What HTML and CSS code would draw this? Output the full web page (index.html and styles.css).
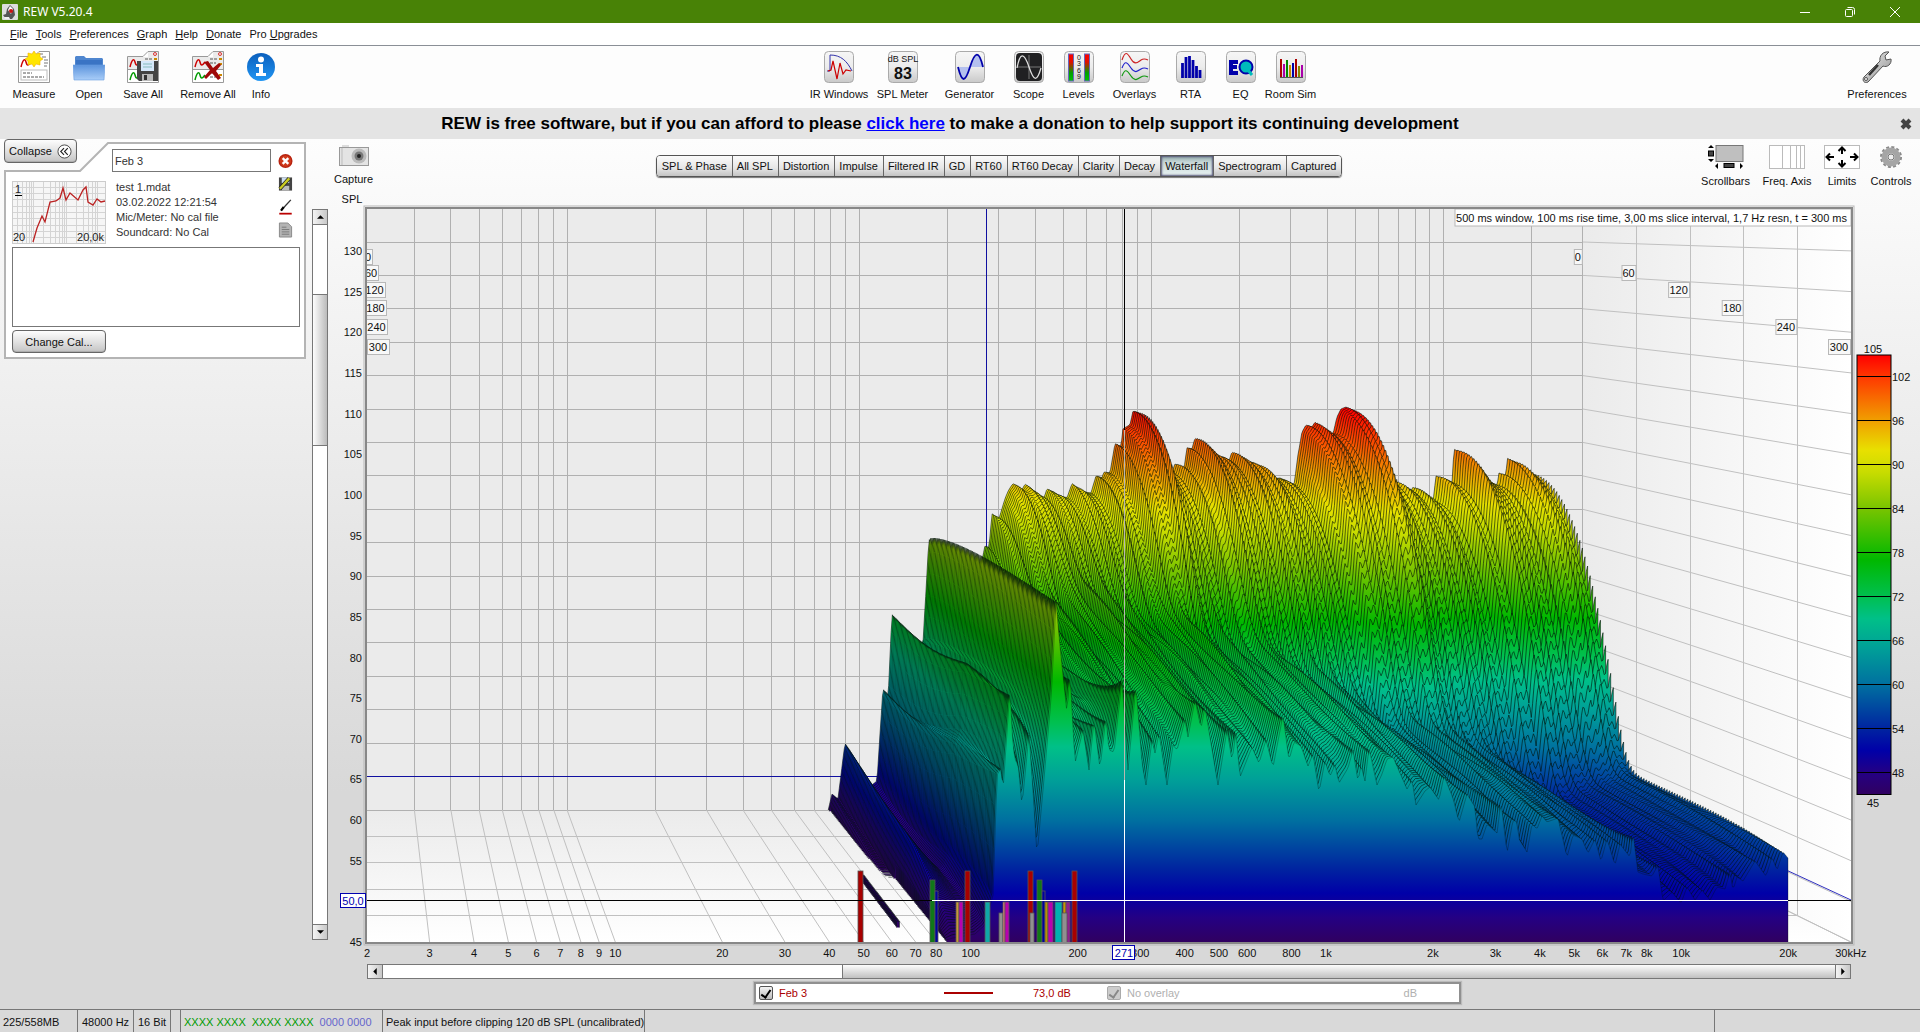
FILE: index.html
```html
<!DOCTYPE html>
<html lang="en">
<head>
<meta charset="utf-8">
<title>REW V5.20.4</title>
<link rel="stylesheet" href="styles.css">
</head>
<body>
<svg class="defs" aria-hidden="true">
  <defs>
    <linearGradient id="tile" x1="0" y1="0" x2="0" y2="1"><stop offset="0" stop-color="#f6f6f6"/><stop offset=".5" stop-color="#ececec"/><stop offset="1" stop-color="#c9c9c9"/></linearGradient>
    <linearGradient id="meter" x1="0" y1="0" x2="0" y2="1"><stop offset="0" stop-color="#f00"/><stop offset=".3" stop-color="#e01000"/><stop offset=".7" stop-color="#00a000"/><stop offset="1" stop-color="#00c000"/></linearGradient>
    <linearGradient id="folder" x1="0" y1="0" x2="0" y2="1"><stop offset="0" stop-color="#5b93dc"/><stop offset="1" stop-color="#a9cdf8"/></linearGradient>
    <linearGradient id="blue" x1="0" y1="0" x2="0" y2="1"><stop offset="0" stop-color="#0b5fbd"/><stop offset="1" stop-color="#2196f3"/></linearGradient>
    <linearGradient id="metal" x1="0" y1="0" x2="1" y2="1"><stop offset="0" stop-color="#f2f2f2"/><stop offset="1" stop-color="#8d8d8d"/></linearGradient>
    <symbol id="sheet" viewBox="0 0 32 32">
      <path d="M.5 31.500V5.500H16l5-5h10.500v31z" fill="#fff" stroke="#999"/>
      <path d="M1 6h20V1h10v17H1z" fill="#ddd" opacity=".6"/>
      <path d="M3 16c2-8 4-9 5-5s2 4 5 0" fill="none" stroke="#c00" stroke-width="1.500"/>
      <path d="M3 29c2-8 4-9 5-5s2 4 5 0" fill="none" stroke="#090" stroke-width="1.500"/>
      <path d="M18 8h7M18 12h6M18 22h7M18 26h6" stroke="#555" stroke-dasharray="3 1"/>
      <path d="M27 8h3M27 13h3M27 24h3" stroke="#c80" stroke-width="2"/>
      <circle cx="28" cy="3" r="1.500" fill="none" stroke="#d33"/>
      <path d="M1 18.500h30" stroke="#999"/>
    </symbol>
  </defs>
</svg>

<header class="titlebar">
  <svg class="app-icon" viewBox="0 0 16 16"><rect width="16" height="16" rx="1" fill="#ddd"/><path d="M8 1l4 4 1 6-3 4H4L1 11l3-1 1-5z" fill="#555"/><path d="M8 2l3 3-2 5-3-4z" fill="#fff"/><circle cx="9" cy="7" r="2" fill="#c11"/><path d="M2 13h5l1 2H3z" fill="#eee"/></svg>
  <h1>REW V5.20.4</h1>
  <div class="window-buttons">
    <button aria-label="Minimize"><svg viewBox="0 0 12 12"><path d="M1 6.500h10"/></svg></button>
    <button aria-label="Restore"><svg viewBox="0 0 12 12"><rect x="1.500" y="3.500" width="7" height="7" rx="1"/><path d="M3.500 1.500h5q2 0 2 2v5"/></svg></button>
    <button aria-label="Close"><svg viewBox="0 0 12 12"><path d="M1 1l10 10M11 1L1 11"/></svg></button>
  </div>
</header>

<nav class="menu">
  <button><u>F</u>ile</button><button><u>T</u>ools</button><button><u>P</u>references</button><button><u>G</u>raph</button><button><u>H</u>elp</button><button><u>D</u>onate</button><button>Pro <u>U</u>pgrades</button>
</nav>

<div class="toolbar">
  <div class="tools tools-file">
    <button><svg viewBox="0 0 32 32"><path d="M.5 31.500V5.500H16l5-5h10.500v31z" fill="#fff" stroke="#999"/><path d="M3 16c2-8 4-9 5-5s2 4 5 0" fill="none" stroke="#c00" stroke-width="1.500"/><path d="M20 3h5M24 6h4M26 9h4M26 12h4M26 15h3" stroke="#777"/><rect x="3" y="19" width="26" height="10" fill="#fff" stroke="#bbb"/><path d="M5 22h9M5 26h21" stroke="#555" stroke-dasharray="3 1"/><path d="M16 0l2 3 4-1 0 4 3 2-3 2 0 4-4-1-2 3-2-3-4 1 0-4-3-2 3-2 0-4 4 1z" fill="#ffe500" stroke="#f0b000" stroke-width=".6"/></svg>Measure</button>
    <button><svg viewBox="0 0 32 32"><path d="M2 14V6l1-1h8l2 2h16l1 1v6z" fill="#4f86cf"/><path d="M3 14V9h26v5z" fill="#3a74c4"/><path d="M0 14h32l-1 15H1z" fill="url(#folder)" stroke="#6a9ee0" stroke-width=".6"/></svg>Open</button>
    <button><svg viewBox="0 0 32 32"><use href="#sheet"/><path d="M10 10h21v20H12l-2-2z" fill="#444"/><rect x="14" y="10" width="13" height="10" fill="#d6e8fa"/><path d="M16 13h9M16 16h9" stroke="#8bb"/><rect x="15" y="23" width="11" height="7" fill="#bbb"/><rect x="17" y="24" width="3" height="5" fill="#333"/></svg>Save All</button>
    <button><svg viewBox="0 0 32 32"><use href="#sheet"/><path d="M12 11l4-1 5 7 6-5 2 2-5 6 5 7-3 2-6-7-6 6-2-2 6-7z" fill="#a00808"/></svg>Remove All</button>
    <button><svg viewBox="0 0 32 32"><circle cx="16" cy="16" r="14" fill="url(#blue)"/><circle cx="16" cy="8.500" r="3" fill="#fff"/><path d="M11 13h7v9h3v3H11v-3h3v-6h-3z" fill="#fff"/></svg>Info</button>
  </div>
  <div class="tools tools-main">
    <button><svg viewBox="0 0 32 32"><rect class="tile" x="1.500" y=".5" width="29" height="31" rx="4"/><path d="M4 20h3V4c11 0 17 6 22 16" fill="none" stroke="#33a"/><path d="M5 20l3-1 2-9 4 18 3-16 3 11 3-4 5 1" fill="none" stroke="#c00" stroke-width="1.200"/></svg>IR Windows</button>
    <button><svg viewBox="0 0 32 32"><rect class="tile" x="1.500" y=".5" width="29" height="31" rx="4"/><text x="16" y="11" font-size="9">dB SPL</text><text x="16" y="28" font-size="16" font-weight="bold">83</text></svg>SPL Meter</button>
    <button><svg viewBox="0 0 32 32"><rect class="tile" x="1.500" y=".5" width="29" height="31" rx="4"/><path d="M4 16h25C24-4 21 2 16 16 9 36 6 26 4 16z" fill="#b4c0ee"/><path d="M4 16c4 16 7 16 12 0S25-1 29 16" fill="none" stroke="#00a" stroke-width="1.800"/></svg>Generator</button>
    <button><svg viewBox="0 0 32 32"><rect class="tile" x="1.500" y=".5" width="29" height="31" rx="4"/><rect x="3" y="2" width="26" height="28" rx="4" fill="#202022"/><path d="M4 16h24M16 4v24" stroke="#777"/><path d="M4 17C7 1 11 1 16 16s8 15 12 1" fill="none" stroke="#ddd" stroke-width="1.300"/></svg>Scope</button>
    <button><svg viewBox="0 0 32 32"><rect class="tile" x="1.500" y=".5" width="29" height="31" rx="4"/><rect x="5.500" y="3" width="5" height="27" fill="url(#meter)" stroke="#66b"/><rect x="21.500" y="3" width="5" height="27" fill="url(#meter)" stroke="#66b"/><g font-size="7"><text x="16" y="9">0</text><text x="16" y="15">3</text><text x="16" y="22">6</text><text x="16" y="28">9</text></g></svg>Levels</button>
    <button><svg viewBox="0 0 32 32"><rect class="tile" x="1.500" y=".5" width="29" height="31" rx="4"/><g fill="none" stroke-width="1.200"><path d="M3 9C6 0 8 1 12 8s7 3 10 1 5-1 7 0" stroke="#c22"/><path d="M3 17c3-8 5-6 9 0s7 3 10 1 5-1 7 0" stroke="#22c"/><path d="M3 25c3-8 5-6 9 0s7 3 10 1 5-1 7 0" stroke="#191"/></g></svg>Overlays</button>
    <button><svg viewBox="0 0 32 32"><rect class="tile" x="1.500" y=".5" width="29" height="31" rx="4"/><path d="M7.500 27V12M11 27V6M14.500 27V5M18 27V9M21.500 27V15M25 27v-8" stroke="#00a" stroke-width="2.800"/></svg>RTA</button>
    <button><svg viewBox="0 0 32 32"><rect class="tile" x="1.500" y=".5" width="29" height="31" rx="4"/><path d="M4 9h9v4H8v1h4v4H8v2h5v4H4z" fill="#00a"/><circle cx="21" cy="16" r="6.500" fill="#0bb" stroke="#00a" stroke-width="2"/><path d="M22 18l5 6" stroke="#0bb" stroke-width="3"/></svg>EQ</button>
    <button><svg viewBox="0 0 32 32"><rect class="tile" x="1.500" y=".5" width="29" height="31" rx="4"/><path d="M5 26.500h23" stroke="#555"/><g stroke-width="2"><path d="M6 26V8" stroke="#a00"/><path d="M9 26V13" stroke="#a0a"/><path d="M12 26V9" stroke="#080"/><path d="M15 26V14" stroke="#c80"/><path d="M18 26V12" stroke="#00a"/><path d="M21 26V8" stroke="#a00"/><path d="M24 26V15" stroke="#880"/><path d="M27 26V14" stroke="#a0a"/></g></svg>Room Sim</button>
  </div>
  <div class="tools tools-prefs">
    <button><svg viewBox="0 0 32 32"><path d="M3 26L19 10c-1-5 3-10 9-9l-4 4 1 4 5-1c1 5-4 9-8 7L8 30c-3 4-8 0-5-4z" fill="url(#metal)" stroke="#555"/><path d="M8 24l9-10" stroke="#333" stroke-width="2.500"/><circle cx="5" cy="28" r="1.500" fill="#fff" stroke="#555"/></svg>Preferences</button>
  </div>
</div>

<div class="banner">
  <p>REW is free software, but if you can afford to please <a href="#donate">click here</a> to make a donation to help support its continuing development</p>
  <button aria-label="Dismiss"><svg viewBox="0 0 12 12"><path d="M2 2l8 8M10 2l-8 8" stroke="#444" stroke-width="4"/></svg></button>
</div>

<main class="workspace">
  <aside class="side">
    <button class="collapse">Collapse <svg viewBox="0 0 16 16"><circle cx="8" cy="8" r="7" fill="#fff" stroke="#444"/><path d="M7.500 4.500L4 8l3.500 3.500M11.500 4.500L8 8l3.500 3.500" fill="none" stroke="#222" stroke-width="1.200"/></svg></button>
    <section class="card">
      <svg class="card-shape" viewBox="0 0 302 217" preserveAspectRatio="none"><path d="M1 29h75l28-28h197v215H1z"/></svg>
      <input class="name" type="text" value="Feb 3" aria-label="Measurement name">
      <div class="info">
        <svg class="thumb" viewBox="0 0 94 63">
          <rect x=".5" y=".5" width="93" height="62" fill="#f6f6f6" stroke="#ccc"/>
          <path d="M1 6.500h92M1 12.500h92M1 18.500h92M1 25.500h92M1 31.500h92M1 37.500h92M1 44.500h92M1 50.500h92M1 56.500h92M5.500 1v61M10.500 1v61M14.500 1v61M17.500 1v61M19.500 1v61M21.500 1v61M31.500 1v61M38.500 1v61M43.500 1v61M47.500 1v61M50.500 1v61M52.500 1v61M54.500 1v61M64.500 1v61M71.500 1v61M76.500 1v61M80.500 1v61M83.500 1v61M85.500 1v61" stroke="#d4d4d4"/>
          <path d="M21 61l4-14 5-12 3 6 5-20 6-1 4-3 3-10 3 12 4-7 8 7 5-10 3-3 2 15 5 3 4-6 4 3 4-1" fill="none" stroke="#b22" stroke-width="1.300"/>
          <text x="3" y="12">1</text><path d="M3 14.500h7" stroke="#000"/>
          <text x="1" y="60">20</text><text x="92" y="60" text-anchor="end">20,0k</text>
        </svg>
        <ul>
          <li>test 1.mdat</li><li>03.02.2022 12:21:54</li><li>Mic/Meter: No cal file</li><li>Soundcard: No Cal</li>
        </ul>
      </div>
      <div class="actions">
        <button aria-label="Delete"><svg viewBox="0 0 16 16"><circle cx="8" cy="8" r="7.500" fill="#b8230f"/><circle cx="8" cy="8" r="6" fill="#cf3a1c"/><path d="M5 5l6 6M11 5l-6 6" stroke="#fff" stroke-width="2.500"/></svg></button>
        <button aria-label="Save"><svg viewBox="0 0 16 16"><path d="M1 1h14v14H1z" fill="#444"/><rect x="4" y="1" width="8" height="6" fill="#cde"/><rect x="4" y="10" width="8" height="5" fill="#bbb"/><path d="M2 13L12 2" stroke="#222" stroke-width="4"/><path d="M2 13L12 2" stroke="#cc2" stroke-width="2.500"/></svg></button>
        <button aria-label="Trace colour"><svg viewBox="0 0 16 18"><path d="M3 13L14 1" stroke="#333" stroke-width="1.500"/><path d="M3 13l3-4" stroke="#000" stroke-width="2.500"/><path d="M1 16.500h14" stroke="#b00" stroke-width="2"/></svg></button>
        <button aria-label="Notes"><svg viewBox="0 0 16 16"><path d="M1.500.5h9l4 4v11h-13z" fill="#b4b4b4" stroke="#888"/><path d="M4 5h5M4 7.500h8M4 10h8M4 12.500h8" stroke="#777"/></svg></button>
      </div>
      <textarea class="notes" aria-label="Notes"></textarea>
      <button class="change-cal">Change Cal...</button>
    </section>
  </aside>

  <div class="graph">
    <div class="graph-head">
      <button class="icon-button capture"><svg viewBox="0 0 30 22"><rect x="3" y="0" width="7" height="4" fill="#ddd"/><rect x=".5" y="2.500" width="29" height="18" fill="#e4e4e4" stroke="#999"/><path d="M3 3v17" stroke="#bbb"/><circle cx="20" cy="11" r="7.500" fill="#bbb"/><circle cx="20" cy="11" r="4.500" fill="#777"/><circle cx="20" cy="11" r="2" fill="#222"/></svg>Capture</button>
      <div class="tab-area">
        <div class="tabs">
          <button>SPL &amp; Phase</button><button>All SPL</button><button>Distortion</button><button>Impulse</button><button>Filtered IR</button><button>GD</button><button>RT60</button><button>RT60 Decay</button><button>Clarity</button><button>Decay</button><button class="active">Waterfall</button><button>Spectrogram</button><button>Captured</button>
        </div>
      </div>
      <div class="graph-tools">
        <button class="icon-button"><svg viewBox="0 0 36 24"><path d="M3 0l3 3H0zM3 17l3-3H0zM7 21l3-3v6zM35 21l-3-3v6z"/><rect x=".5" y="6" width="5" height="5" fill="#444" stroke="#000"/><rect x="8" y=".5" width="27" height="16" fill="#bfbfbf" stroke="#777"/><rect x="16" y="18.500" width="10" height="4" fill="#444" stroke="#000"/></svg>Scrollbars</button>
        <button class="icon-button"><svg viewBox="0 0 36 24"><rect x=".5" y=".5" width="35" height="23" fill="#fff" stroke="#bbb"/><path d="M13.500 1v22M21.500 1v22M27.500 1v22M31.500 1v22" stroke="#bbb"/></svg>Freq. Axis</button>
        <button class="icon-button"><svg viewBox="0 0 36 24"><rect x=".5" y=".5" width="35" height="23" fill="#fff" stroke="#bbb"/><path d="M18 9V3M14.500 6L18 2.500 21.500 6M18 15v6M14.500 18l3.500 3.500 3.500-3.500M10 12H3M6 8.500L2.500 12 6 15.500M26 12h7M30 8.500l3.500 3.500-3.500 3.500" fill="none" stroke="#000" stroke-width="2"/></svg>Limits</button>
        <button class="icon-button"><svg viewBox="0 0 24 24"><circle cx="12" cy="12" r="10" fill="none" stroke="#8a8a8a" stroke-width="2" stroke-dasharray="3 2.240"/><circle cx="12" cy="12" r="6.500" fill="none" stroke="#a5a5a5" stroke-width="6"/><circle cx="12" cy="12" r="3" fill="#eee" stroke="#777"/></svg>Controls</button>
      </div>
    </div>
    <div class="vscroll">
      <button aria-label="Scroll up"><svg viewBox="0 0 8 4"><path d="M4 0l4 4H0z"/></svg></button>
      <div class="track"><div class="thumb-v"></div></div>
      <button aria-label="Scroll down"><svg viewBox="0 0 8 4"><path d="M4 4L0 0h8z"/></svg></button>
    </div>
    <div class="chart"><svg id="chart" role="img" aria-label="Waterfall"></svg></div>
    <div class="hscroll">
      <button aria-label="Scroll left"><svg viewBox="0 0 4 8"><path d="M0 4l4-4v8z"/></svg></button>
      <div class="track"><div class="thumb-h"></div></div>
      <button aria-label="Scroll right"><svg viewBox="0 0 4 8"><path d="M4 4L0 0v8z"/></svg></button>
    </div>
    <div class="legend">
      <label class="trace"><input type="checkbox" checked>Feb 3</label>
      <span class="swatch"></span>
      <span class="level">73,0 dB</span>
      <label class="overlay"><input type="checkbox" checked disabled>No overlay</label>
      <span class="overlay-level">dB</span>
    </div>
  </div>
</main>

<footer class="status">
  <span class="memory">225/558MB</span><span class="rate">48000 Hz</span><span class="bits">16 Bit</span><span class="spare"></span>
  <span class="flags"><b>XXXX XXXX</b><b>XXXX XXXX</b><i>0000 0000</i></span>
  <span class="message">Peak input before clipping 120 dB SPL (uncalibrated)</span><span class="fill"></span><span class="end"></span>
</footer>
<script src="chart.js"></script>
</body>
</html>
```
FILE: styles.css
```css
* { box-sizing: border-box; }
body {
  margin: 0; min-height: 100vh; display: flex; flex-direction: column;
  font: 11px/14px "Liberation Sans", Arial, sans-serif; color: #111; background: #d9d9d9;
}
button { font: inherit; color: inherit; background: none; border: 0; padding: 0; margin: 0; white-space: nowrap; }
svg { display: block; }
.defs { position: absolute; width: 0; height: 0; }

.titlebar { height: 23px; background: #488206; display: flex; align-items: center; padding: 0 3px 0 2px; }
.app-icon { width: 16px; height: 16px; }
.titlebar h1 { margin: 0; padding-left: 5px; flex: 1; font: 12px/20px "Noto Sans", sans-serif; color: #fff; }
.window-buttons { display: flex; }
.window-buttons button { width: 45px; height: 20px; display: flex; align-items: center; justify-content: center; }
.window-buttons svg { width: 12px; height: 12px; fill: none; stroke: #fff; }

.menu { height: 23px; background: #fff; border-bottom: 1px solid #8a8f96; display: flex; gap: 8px; padding-left: 10px; align-items: center; }

.toolbar { height: 62px; background: #fdfdfd; display: flex; justify-content: space-between; }
.tools { display: grid; }
.tools button { display: flex; flex-direction: column; align-items: center; padding-top: 5px; gap: 4px; }
.tools svg { width: 32px; height: 32px; }
.tools svg text { text-anchor: middle; fill: #111; }
.tools-file { grid-template-columns: 54px 56px 52px 78px 28px; padding: 0 15px 0 7px; }
.tools-main { grid-template-columns: 65px 62px 72px 46px 54px 58px 54px 46px 54px; }
.tools-prefs { grid-template-columns: 86px; }
.tile { fill: url(#tile); stroke: #aaa; }

.banner { height: 31px; background: #e4e4e4; display: flex; align-items: center; padding: 1px 8px 0 0; }
.banner p { margin: 0; flex: 1; text-align: center; font-size: 17px; line-height: 20px; font-weight: bold; color: #000; }
.banner a { color: #00f; }
.banner svg { width: 12px; height: 12px; }

.workspace { flex: 1; display: grid; grid-template-columns: 312px 1fr; background: linear-gradient(#fdfdfd, #d8d8d8 75%); }
.side { padding: 3px 6px 0 4px; position: relative; }
.collapse, .change-cal { border: 1px solid #666; border-radius: 4px; background: linear-gradient(#fdfdfd, #e2e2e2 50%, #c4c4c4); box-shadow: inset 0 -1px 1px #aaa; }
.collapse { position: absolute; left: 4px; top: 0; width: 73px; height: 24px; display: flex; align-items: center; justify-content: center; gap: 5px; z-index: 1; }
.collapse svg { width: 15px; height: 15px; }
.card { position: relative; display: grid; grid-template-columns: 259px 1fr; height: 217px; padding: 7px 6px 6px 8px; grid-template-rows: 23px 69px 1fr 23px; row-gap: 3px; }
.card-shape { position: absolute; inset: 0; width: 100%; height: 100%; }
.card-shape path { fill: #fff; stroke: #b4b4b4; stroke-width: 2; }
.card > :not(svg) { position: relative; }
.name { grid-column: 1; justify-self: end; width: 159px; border: 1px solid #777; padding: 0 2px; font: inherit; color: #333; background: #fff; }
.info { grid-column: 1; grid-row: 2; display: flex; gap: 10px; padding-top: 6px; }
.thumb { width: 94px; height: 63px; }
.thumb text { font-size: 11px; fill: #222; }
.info ul { list-style: none; margin: -1px 0 0; padding: 0; line-height: 15px; color: #333; }
.actions { grid-column: 2; grid-row: 1 / 3; display: flex; flex-direction: column; align-items: center; justify-content: space-between; padding: 4px 0 6px; }
.actions svg { width: 15px; height: 16px; }
.notes { grid-column: 1 / 3; border: 1px solid #777; resize: none; background: #fff; margin: 0; }
.change-cal { justify-self: start; width: 94px; }

.graph { display: grid; min-width: 0; grid-template: 51px 19px 1fr 24px 15px 30px / 18px 37px 1fr 69px; }
.graph-head { grid-area: 1 / 1 / 2 / 5; display: flex; padding: 6px 4px 0 22px; align-items: flex-start; }
.icon-button { display: flex; flex-direction: column; align-items: center; gap: 5px; }
.icon-button svg { height: 24px; width: 36px; }
.capture svg { width: 30px; height: 22px; }
.tab-area { flex: 1; display: flex; justify-content: center; padding: 10px 70px 0 0; }
.tabs { display: flex; border: 1px solid #555; border-radius: 4px; overflow: hidden; box-shadow: 0 1px 1px #777; }
.tabs button { height: 20px; padding: 0 5px 0 4px; border-left: 1px solid #666; background: linear-gradient(#fbfbfb, #e6e6e6 60%, #c4c4c4); }
.tabs button:first-child { border-left: 0; padding: 0 5px; }
.tabs .active { background: linear-gradient(#8fa9a9, #c6d6d6 30%, #e8f2f2); box-shadow: inset 0 0 2px 1px #557; }
.graph-tools { display: grid; grid-template-columns: 61px 62px 48px 50px; }

.vscroll { grid-area: 3 / 1; width: 16px; border: 1px solid #777; display: flex; flex-direction: column; background: #fff; }
.vscroll button, .hscroll button { display: flex; align-items: center; justify-content: center; background: linear-gradient(90deg, #f4f4f4, #c8c8c8); }
.vscroll button { height: 15px; border-bottom: 1px solid #777; }
.vscroll button:last-child { border-bottom: 0; border-top: 1px solid #777; }
.vscroll svg { width: 7px; height: 4px; }
.track { flex: 1; }
.vscroll .track { display: grid; grid-template-rows: 10fr 22fr 69fr; }
.thumb-v { grid-row: 2; border: solid #777; border-width: 1px 0; background: linear-gradient(90deg, #fdfdfd, #bbb); }
.chart { grid-area: 2 / 1 / 5 / 5; margin-left: 18px; position: relative; min-height: 0; }
.chart svg { position: absolute; width: 100%; height: 100%; }
.chart text { font-size: 11px; fill: #111; }
.hscroll { grid-area: 5 / 3; border: 1px solid #777; display: flex; background: #fff; }
.hscroll button { width: 15px; border-right: 1px solid #777; }
.hscroll button:last-child { border-right: 0; border-left: 1px solid #777; }
.hscroll svg { width: 4px; height: 7px; }
.hscroll .track { display: grid; grid-template-columns: 459fr 994fr; }
.thumb-h { grid-column: 2; border-left: 1px solid #777; background: linear-gradient(#fdfdfd, #c0c0c0); }

.legend { grid-area: 6 / 3; justify-self: center; align-self: start; width: 707px; height: 22px; margin: 3px 3px 0 0; background: #fff; border: 2px solid #909090; display: flex; align-items: center; padding: 0 42px 0 3px; color: #a00; box-shadow: 0 0 1px 1px #bbb; }
.legend label { display: flex; align-items: center; gap: 6px; }
.legend input { appearance: none; width: 14px; height: 14px; margin: 0; border: 1px solid #555; border-radius: 2px; background: linear-gradient(#f4f4f4, #bbb); display: grid; place-items: center; }
.legend input::after { content: ""; width: 4px; height: 8px; border: solid #000; border-width: 0 2px 2px 0; transform: rotate(35deg); }
.legend input:disabled { border-color: #aaa; background: #ccc; }
.legend input:disabled::after { border-color: #888; }
.trace { width: 185px; }
.swatch { width: 49px; height: 2px; background: #a00; }
.level { width: 114px; padding-left: 40px; }
.overlay, .overlay-level { color: #b0b0b0; }
.overlay-level { margin-left: auto; }

.status { height: 23px; border-top: 1px solid #777; display: flex; background: #d9d9d9; white-space: nowrap; }
.status > span { border-right: 1px solid #777; padding: 5px 0 0 3px; flex: none; }
.memory { width: 78px; }
.status .rate { width: 56px; padding-left: 4px; }
.status .bits { width: 37px; padding-left: 4px; }
.spare { width: 10px; }
.flags { width: 202px; display: flex; gap: 6px; color: #090; }
.flags b { font-weight: normal; }
.flags i { font-style: normal; color: #66c; }
.message { width: 262px; }
.status .fill { flex: 1; }
.status .end { width: 205px; border: 0; }
```
FILE: chart.js
```js
// Waterfall plot: frequency left to right, level upwards, time towards the viewer.
const svg = document.getElementById('chart');

// Profiles are digitised on a 1484 x 733 plot whose corner is at (367, 209).
const OX = 367, OY = 209, PW = 1484, PH = 733;
const DEPTH = 0.822, SLICES = 100;

const BACK = [828,811,832,794,838,799,845,743,852,757,868,788,877,781,883,688,888,700,892,614,900,632,915,650,923,643,929,538,933,556,938,580,950,595,970,595,980,575,985,550,989,552,992,518,999,523,1005,503,1009,493,1013,486,1022,493,1025,487,1035,497,1044,502,1047,493,1060,500,1067,501,1072,485,1082,494,1091,495,1096,477,1102,479,1104,473,1110,474,1115,444,1121,447,1123,429,1130,425,1133,411,1139,413,1146,440,1160,470,1172,473,1175,464,1184,469,1187,448,1192,449,1195,438,1202,444,1217,457,1223,457,1229,461,1232,452,1238,456,1248,463,1251,462,1259,466,1273,479,1280,478,1294,485,1298,455,1302,432,1306,425,1312,427,1315,422,1322,430,1333,434,1337,417,1341,409,1346,407,1352,411,1362,450,1380,482,1393,481,1411,491,1413,487,1433,502,1436,476,1447,480,1452,484,1454,449,1462,454,1475,475,1497,486,1499,473,1506,476,1507,458,1513,462,1522,470,1531,474];
const FRONT = [937,943,946,940,953,938,975,934,985,925,993,895,997,775,1001,768,1003,790,1010,688,1013,747,1016,763,1018,763,1022,805,1029,735,1033,790,1037,855,1043,790,1051,700,1056,602,1060,647,1067,713,1070,673,1075,763,1083,730,1089,770,1094,720,1100,768,1106,717,1109,750,1114,752,1122,680,1128,770,1136,685,1142,763,1146,785,1152,740,1155,753,1159,733,1167,785,1173,745,1177,750,1185,720,1188,737,1195,700,1201,728,1205,707,1218,785,1227,730,1232,760,1236,733,1240,777,1252,747,1259,763,1266,740,1273,767,1283,715,1289,760,1294,742,1301,746,1308,766,1313,754,1319,792,1325,761,1330,776,1335,765,1339,783,1348,768,1353,750,1358,781,1361,765,1365,781,1369,748,1377,785,1382,774,1387,759,1393,757,1407,789,1412,780,1416,805,1425,791,1430,787,1439,800,1444,776,1453,798,1459,822,1467,794,1475,807,1478,839,1482,839,1487,824,1497,833,1501,802,1507,853,1513,820,1517,822,1519,839,1527,852,1532,824,1537,829,1542,816,1547,822,1558,818,1567,857,1573,835,1582,839,1588,853,1595,839,1601,861,1607,839,1615,865,1620,844,1630,857,1633,833,1638,872,1643,874,1652,876,1658,865,1663,901,1672,892,1681,903,1687,887,1695,900,1702,890,1710,900,1717,887,1725,889,1730,872,1733,890,1737,877,1743,881,1755,861,1766,876,1772,857,1777,870,1783,852,1788,858];
const RIDGES = [937,943,946,938,953,930,975,925,986,915,993,880,997,775,1001,766,1006,735,1010,688,1018,697,1030,706,1045,715,1051,700,1056,602,1060,647,1068,672,1080,690];

const COLOURS = [[105,'#ff0000'],[102,'#ff3800'],[96,'#f0a000'],[92,'#e8e000'],[89,'#c8dc00'],[84,'#78c400'],[77,'#00b800'],[72,'#00c050'],[69,'#00c088'],[65,'#00a098'],[60,'#0070a0'],[54,'#0024a0'],[51,'#0000a8'],[48,'#240084'],[45,'#300060']];

const MODES = [
  [858,863,871,'#a80000'],[930,935,880,'#107818'],[935,938,891,'#0000a0'],[956,959,902,'#c89838'],[959,963,902,'#b800b0'],
  [965,970,871,'#a80000'],[985,990,902,'#10a8a8'],[999,1003,913,'#909090'],[1003,1005,902,'#f08080'],[1005,1009,902,'#b800b0'],
  [1028,1033,871,'#a80000'],[1030,1034,913,'#909090'],[1037,1042,880,'#107818'],[1042,1045,891,'#0000a0'],[1045,1048,902,'#b89000'],
  [1048,1053,902,'#b800b0'],[1055,1062,902,'#00b0b0'],[1063,1066,902,'#c89800'],[1066,1070,902,'#902090'],[1062,1067,913,'#909090'],[1072,1077,871,'#a80000']];

function lerpTable(t, x) {
  if (x <= t[0]) return t[1];
  for (let i = 2; i < t.length; i += 2)
    if (x <= t[i]) return t[i - 1] + (t[i + 1] - t[i - 1]) * (x - t[i - 2]) / (t[i] - t[i - 2]);
  return t[t.length - 1];
}
const backX = x => OX - 4 + DEPTH * (x - OX);
const scale = u => DEPTH + (1 - DEPTH) * u;
const planeX = (x, u) => backX(x) + (x - backX(x)) * u;
const planeY = (v, u) => 810 + 132 * u - 8.13 * scale(u) * (v - 45);
const freqX = f => OX + 355.3 * Math.log10(f / 2);

const startLevel = x => 45 + (810 - lerpTable(BACK, backX(x))) / (8.13 * DEPTH);
const endLevel = x => 45 + (942 - lerpTable(FRONT, x)) / 8.13;
function smoothEnd(x) {
  if (x < 1075) return 45 + (942 - lerpTable(RIDGES, x)) / 8.13;
  let sum = 0;
  for (let d = -20; d <= 20; d += 4) sum += endLevel(Math.min(1787, Math.max(1060, x + d)));
  return sum / 11 + 1.5;
}

const COLS = [];
for (let x = 900; x <= 1788; x += 1.5) COLS.push({ x, a: startLevel(x), b: endLevel(x), s: smoothEnd(x) });

function level(c, u) {
  const x = c.x;
  if (x < 932) return x > 906 && x < 911 && u > .53 && u < .9 ? 45.8 : 44;
  if (x < 946) return c.a - (c.a - 44.6) * u / (.55 + (x - 932) / 140);
  const target = c.s + (c.b - c.s) * Math.pow(u, 5);
  if (x < 1059) {
    const bow = x > 1046 ? 1.4 * Math.sin(Math.PI * Math.pow(u, .6)) : -1.2 * Math.sin(Math.PI * Math.min(1, u * 1.6));
    return c.a + (target - c.a) * (x < 995 ? u * u : u) + bow;
  }
  const high = Math.max(0, Math.min(1, (x - 1500) / 250));
  const direct = c.a - (200 + 50 * high) * u * u - (250 + 100 * high) * u ** 4;
  const lift = Math.max(1, 15 - (x - 1060) / 52);
  const swell = Math.min(1, u * 3) * (1 - u) * (1 - .8 * high);
  const ripple = 1.4 * (Math.sin(x * .31 + u * 7) + .7 * Math.sin(x * .13 - u * 5));
  const grain = 1.1 * Math.sin(x * .83) + .8 * Math.sin(x * .57 + 1);
  const tail = Math.min(c.s + lift, c.a - 8) * (1 - u) + target * u + (ripple + grain) * swell;
  const sum = 10 * Math.log10(10 ** ((direct + grain * Math.min(1, u * 5)) / 10) + 10 ** (tail / 10));
  return sum;
}

function draw() {
  const w = svg.clientWidth, h = svg.clientHeight;
  const L = 37, T = 19, pw = w - L - 69, ph = h - T - 22;
  const X = x => +(L + (x - OX) * pw / PW).toFixed(1);
  const Y = y => +(T + (y - OY) * ph / PH).toFixed(1);
  const line = (x1, y1, x2, y2, stroke, extra = '') => `<path d="M${X(x1)} ${Y(y1)}L${X(x2)} ${Y(y2)}" stroke="${stroke}" fill="none" ${extra}/>`;
  const crisp = 'shape-rendering="crispEdges"';
  const text = (x, y, s, anchor = 'middle', fill = '#111') => `<text x="${x}" y="${y}" text-anchor="${anchor}" style="fill:${fill}">${s}</text>`;
  const stops = COLOURS.map(([v, c]) => `<stop offset="${(105 - v) / 60}" stop-color="${c}"/>`).join('');
  let o = `<defs><linearGradient id="lv" x1="0" x2="0" y1="0" y2="1">${stops}</linearGradient>
    <linearGradient id="floor" x1="0" x2="0" y1="0" y2="1"><stop offset="0" stop-color="#ebebeb"/><stop offset="1" stop-color="#fff"/></linearGradient>
    <linearGradient id="wall"><stop offset="0" stop-color="#ebebeb"/><stop offset="1" stop-color="#fff"/></linearGradient>
    <clipPath id="plot"><rect x="${L}" y="${T}" width="${pw}" height="${ph}"/></clipPath></defs>`;
  o += `<rect x="${L - 2}" y="${T - 2}" width="${pw + 4}" height="${ph + 4}" fill="#888"/><rect x="${L - 3}" y="${T - 3}" width="${pw + 6}" height="${ph + 6}" fill="none" stroke="#b8b8b8"/>`;
  o += `<g clip-path="url(#plot)"><rect x="${L}" y="${T}" width="${pw}" height="${ph}" fill="#ebebeb"/>`;
  const xb = backX(1851), g = '#b0b0b0', g2 = '#c0c0c0';
  o += `<path d="M${X(367)} ${Y(810)}H${X(xb)}L${X(1851)} ${Y(942)}H${X(367)}z" fill="url(#floor)"/>`;
  o += `<path d="M${X(xb)} ${Y(209)}H${X(1851)}V${Y(942)}L${X(xb)} ${Y(810)}z" fill="url(#wall)"/>`;
  for (let v = 45; v <= 135; v += 5) {
    o += line(367, planeY(v, 0), xb, planeY(v, 0), g, crisp) + line(xb, planeY(v, 0), 1851, planeY(v, 1), g2);
  }
  for (let dec = 1; dec <= 10000; dec *= 10) for (let n = 1; n < 10; n++) {
    const f = n * dec;
    if (f <= 2 || f > 30000) continue;
    o += line(backX(freqX(f)), 209, backX(freqX(f)), 810, g, crisp) + line(backX(freqX(f)), 810, freqX(f), 942, g2);
  }
  for (let k = 1; k <= 5; k++) {
    const u = k / 5, x = planeX(1851, u), y = 810 + 132 * u;
    o += line(367, y, x, y, g2, crisp) + line(x, 209, x, y, g2, crisp);
  }
  o += line(367, 776, xb, 776, '#1010a0', crisp) + line(xb, 776, 1851, 900, '#3030c0') + line(986, 209, 986, 810, '#1010a0', crisp);

  for (let i = 0; i <= SLICES; i++) {
    const u = i / SLICES, base = Y(planeY(45, u));
    o += `<linearGradient id="g${i}" href="#lv" gradientUnits="userSpaceOnUse" x1="0" x2="0" y1="${Y(planeY(105, u))}" y2="${base}"/>`;
    let d = '', open = false, last = 0;
    for (const c of COLS) {
      const v = level(c, u);
      if (v > 45) {
        last = X(planeX(c.x, u));
        if (!open) { d += `M${last} ${base}`; open = true; }
        d += `L${last} ${Y(planeY(v, u))}`;
      } else if (open) { d += `V${base}`; open = false; }
    }
    if (open) d += `L${last} ${base}`;
    o += `<path d="${d}" fill="url(#g${i})" stroke="#001008" stroke-width="${i === SLICES ? .4 : .8}" stroke-opacity=".75"/>`;
  }
  for (const [x1, x2, y, c] of MODES)
    o += `<rect x="${X(x1)}" y="${Y(y)}" width="${X(x2) - X(x1)}" height="${Y(943) - Y(y)}" fill="${c}" stroke="#555" stroke-width=".8"/>`;
  o += line(367, 900.500, 932, 900.500, '#000', crisp) + line(932, 900.500, 1788, 900.500, '#fff', crisp) + line(1788, 900.500, 1851, 900.500, '#000', crisp);
  o += line(1124.500, 209, 1124.500, 430, '#000', crisp) + line(1124.500, 430, 1124.500, 942, '#b8b8b0', crisp) + line(1124.500, 780, 1124.500, 942, '#fff', crisp);

  const tag = (right, y, s, bw) => `<rect x="${right - bw + .5}" y="${y - 7.500}" width="${bw}" height="15" fill="#f8f8f8" stroke="#b8b8b8"/>` + text(right - bw / 2, y + 4, s);
  [[0,372,257,8],[60,378,273,14],[120,385,290,21],[180,386,308,21],[240,387,327,21],[300,389,347,22]].forEach(([t, r, y, bw]) => {
    o += tag(X(r), Y(y), t, bw) + tag(X(planeX(1851, t / 300)) - 1, Y(y), t, bw);
  });
  o += `<rect x="${L + pw - 396}" y="${T}" width="396" height="17" fill="#fff" stroke="#b8b8b8"/>` + text(L + pw - 4, T + 13, '500 ms window, 100 ms rise time, 3,00 ms slice interval, 1,7 Hz resn, t = 300 ms', 'end');
  o += '</g>';

  o += text(L - 15, 13, 'SPL');
  for (let v = 45; v <= 130; v += 5) if (v !== 50) o += text(L - 5, Y(planeY(v, 1)) + 4, v, 'end');
  o += `<rect x="${L - 26.500}" y="${Y(893) + .5}" width="25" height="14" fill="#fff" stroke="#0000b0"/>` + text(L - 14, Y(900) + 5, '50,0', 'middle', '#0000b0');
  const ticks = [2,3,4,5,6,7,8,9,10,20,30,40,50,60,70,80,100,200,300,400,500,600,800,1000,2000,3000,4000,5000,6000,7000,8000,10000,20000,30000];
  for (const f of ticks) o += text(X(freqX(f)), Y(942) + 15, f < 1000 ? f : f === 30000 ? '30kHz' : f / 1000 + 'k');
  o += `<rect x="${X(1124) - 11.500}" y="${Y(945) + .5}" width="22" height="14" fill="#fff" stroke="#0000b0"/>` + text(X(1124), Y(942) + 15, '271', 'middle', '#0000b0');

  // Level key
  const bx = L + pw + 6, top = Y(355), bh = Y(794.500) - top;
  o += `<rect x="${bx}" y="${top}" width="34" height="${bh}" fill="url(#lv)" stroke="#000"/>`;
  o += text(bx + 16, top - 2, 105) + text(bx + 16, top + bh + 12, 45);
  for (let v = 102; v >= 48; v -= 6) {
    const y = top + bh * (105 - v) / 60;
    o += `<path d="M${bx} ${y}h34" stroke="#000" ${crisp}/>` + text(bx + 35, y + 4, v, 'start');
  }
  svg.innerHTML = o;
}
draw();
addEventListener('resize', draw);
```
